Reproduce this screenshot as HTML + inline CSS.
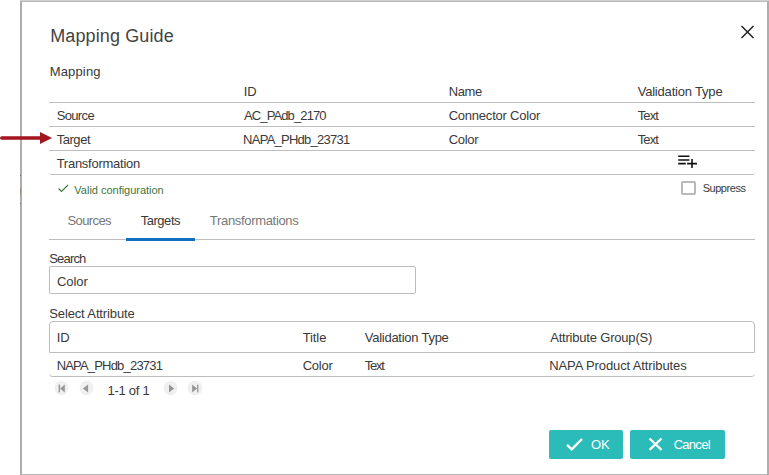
<!DOCTYPE html>
<html><head><meta charset="utf-8">
<style>
html,body{margin:0;padding:0;width:769px;height:475px;overflow:hidden;background:#fff;}
body{position:relative;font-family:"Liberation Sans",sans-serif;color:#333;}
.t{position:absolute;white-space:nowrap;}
.a{position:absolute;}
.hl{position:absolute;height:1px;background:#bdbdbd;}
.pg{position:absolute;top:381.3px;width:13.6px;height:13.6px;border-radius:50%;background:#f0f0f0;box-shadow:0 0 1px #e2e2e2;}
</style></head><body>
<!-- dialog frame -->
<div class="a" style="left:20px;top:0;width:749px;height:475px;box-sizing:border-box;border-left:2px solid #adadad;border-right:2px solid #adadad;border-top:2px solid #bababa;border-bottom:1px solid #b5b5b5;border-radius:2px 2px 0 0;"></div>
<div class="a" style="left:20px;top:0;width:749px;height:1px;background:#d0d0d0;"></div>

<div class="a" style="left:20px;top:175px;width:1px;height:1px;background:#777;"></div>
<div class="a" style="left:20px;top:203px;width:1px;height:1px;background:#777;"></div>
<div class="a" style="left:20px;top:188px;width:1px;height:7px;background:#9a8a80;"></div>

<!-- close -->
<svg class="a" style="left:740px;top:25px" width="15" height="15" viewBox="0 0 15 15"><path d="M1.5 1 L13.5 13 M13.5 1 L1.5 13" stroke="#222" stroke-width="1.5" fill="none"/></svg>

<!-- mapping table lines -->
<div class="hl" style="left:49px;top:102px;width:706px;"></div>
<div class="hl" style="left:49px;top:126px;width:706px;"></div>
<div class="hl" style="left:49px;top:150px;width:706px;"></div>
<div class="a" style="left:49px;top:150px;width:706px;height:25px;border-bottom:1px solid #bdbdbd;border-radius:0 0 3px 3px;box-sizing:border-box;"></div>

<!-- list-add icon -->
<svg class="a" style="left:670px;top:150px" width="30" height="20" viewBox="670 150 30 20"><path d="M678.2 156.3 H689.4 M678.2 160 H689.4 M678.2 163.6 H685.8 M687.1 163.6 H697 M692 159 V168" stroke="#111" stroke-width="1.6" fill="none"/></svg>

<!-- valid check -->
<svg class="a" style="left:57px;top:183px" width="13" height="11" viewBox="0 0 13 11"><path d="M1.5 5.5 L4.5 8.5 L11 2" stroke="#3c763d" stroke-width="1.1" fill="none"/></svg>

<!-- suppress checkbox -->
<div class="a" style="left:681px;top:181px;width:15px;height:14px;border:2px solid #b9b9b9;border-radius:2px;box-sizing:border-box;"></div>

<!-- tabs -->
<div class="hl" style="left:49px;top:239px;width:706px;"></div>
<div class="a" style="left:126px;top:238px;width:69px;height:3px;background:#1170c2;"></div>

<!-- search input -->
<div class="a" style="left:49px;top:266px;width:367px;height:28px;border:1px solid #bdbdbd;border-radius:2px;box-sizing:border-box;"></div>

<!-- grid -->
<div class="a" style="left:49px;top:321px;width:706px;height:32px;border:1px solid #bdbdbd;border-radius:4px 4px 0 0;box-sizing:border-box;"></div>
<div class="a" style="left:49px;top:352px;width:706px;height:25px;border-bottom:1px solid #bdbdbd;border-radius:0 0 4px 4px;box-sizing:border-box;"></div>

<!-- pager -->
<div class="pg" style="left:54.8px;"></div>
<div class="pg" style="left:79.6px;"></div>
<div class="pg" style="left:163.5px;"></div>
<div class="pg" style="left:188.4px;"></div>
<svg class="a" style="left:0;top:370px" width="210" height="30" viewBox="0 370 210 30">
<g fill="#979797">
<rect x="58.6" y="384.6" width="1.5" height="7.8"/><path d="M60.1 388.5 L64.8 384.6 V392.4 Z"/>
<path d="M82.9 388.5 L88.1 384.6 V392.4 Z"/>
<path d="M174.2 388.5 L169 384.6 V392.4 Z"/>
<path d="M197.1 388.5 L192.1 384.6 V392.4 Z"/><rect x="197.1" y="384.6" width="1.3" height="7.8"/>
</g></svg>

<!-- buttons -->
<div class="a" style="left:549px;top:430px;width:74px;height:29px;background:#2bbbb9;border-radius:2px;"></div>
<div class="a" style="left:630px;top:430px;width:95px;height:29px;background:#2bbbb9;border-radius:2px;"></div>
<svg class="a" style="left:560px;top:432px" width="30" height="24" viewBox="560 432 30 24"><path d="M567 444.8 L571.8 449.3 L582 439" stroke="#fff" stroke-width="2.4" fill="none"/></svg>
<svg class="a" style="left:642px;top:432px" width="26" height="24" viewBox="642 432 26 24"><path d="M649.5 438.5 L661.5 449.8 M661.5 438.5 L649.5 449.8" stroke="#fff" stroke-width="2.3" fill="none"/></svg>

<!-- arrow -->
<svg class="a" style="left:0px;top:130px" width="54" height="16" viewBox="0 0 54 16"><path d="M1.8 8 H42" stroke="#a3151f" stroke-width="3.6" stroke-linecap="round"/><path d="M40 2 L52.1 8 L40 14 Z" fill="#a3151f"/></svg>
<div class="t" style="left:50.15px;top:27px;font-size:18px;line-height:18px;color:#444;letter-spacing:0.125px;">Mapping Guide</div>
<div class="t" style="left:49.68px;top:65px;font-size:13px;line-height:13px;color:#393939;letter-spacing:0.167px;">Mapping</div>
<div class="t" style="left:243.73px;top:85px;font-size:13px;line-height:13px;color:#393939;letter-spacing:0.000px;">ID</div>
<div class="t" style="left:448.68px;top:85px;font-size:13px;line-height:13px;color:#393939;letter-spacing:-0.400px;">Name</div>
<div class="t" style="left:637.63px;top:85px;font-size:13px;line-height:13px;color:#393939;letter-spacing:-0.193px;">Validation Type</div>
<div class="t" style="left:56.63px;top:109px;font-size:13px;line-height:13px;color:#393939;letter-spacing:-0.640px;">Source</div>
<div class="t" style="left:244.00px;top:109px;font-size:13px;line-height:13px;color:#393939;letter-spacing:-0.882px;">AC_PAdb_2170</div>
<div class="t" style="left:448.63px;top:109px;font-size:13px;line-height:13px;color:#393939;letter-spacing:-0.214px;">Connector Color</div>
<div class="t" style="left:637.63px;top:109px;font-size:13px;line-height:13px;color:#393939;letter-spacing:-0.833px;">Text</div>
<div class="t" style="left:56.63px;top:133px;font-size:13px;line-height:13px;color:#393939;letter-spacing:-0.440px;">Target</div>
<div class="t" style="left:243.10px;top:133px;font-size:13px;line-height:13px;color:#393939;letter-spacing:-0.743px;">NAPA_PHdb_23731</div>
<div class="t" style="left:448.63px;top:133px;font-size:13px;line-height:13px;color:#393939;letter-spacing:-0.275px;">Color</div>
<div class="t" style="left:637.63px;top:133px;font-size:13px;line-height:13px;color:#393939;letter-spacing:-0.833px;">Text</div>
<div class="t" style="left:56.63px;top:157px;font-size:13px;line-height:13px;color:#393939;letter-spacing:-0.254px;">Transformation</div>
<div class="t" style="left:74.37px;top:185px;font-size:11px;line-height:11px;color:#3c763d;letter-spacing:-0.017px;">Valid configuration</div>
<div class="t" style="left:702.68px;top:183px;font-size:11px;line-height:11px;color:#393939;letter-spacing:-0.457px;">Suppress</div>
<div class="t" style="left:67.47px;top:214px;font-size:13px;line-height:13px;color:#777;letter-spacing:-0.600px;">Sources</div>
<div class="t" style="left:140.63px;top:214px;font-size:13px;line-height:13px;color:#393939;letter-spacing:-0.450px;">Targets</div>
<div class="t" style="left:209.84px;top:214px;font-size:13px;line-height:13px;color:#777;letter-spacing:-0.321px;">Transformations</div>
<div class="t" style="left:49.26px;top:252px;font-size:13px;line-height:13px;color:#393939;letter-spacing:-0.820px;">Search</div>
<div class="t" style="left:57.05px;top:275px;font-size:13px;line-height:13px;color:#393939;letter-spacing:-0.075px;">Color</div>
<div class="t" style="left:49.26px;top:307px;font-size:13px;line-height:13px;color:#393939;letter-spacing:-0.133px;">Select Attribute</div>
<div class="t" style="left:56.73px;top:331px;font-size:13px;line-height:13px;color:#393939;letter-spacing:0.000px;">ID</div>
<div class="t" style="left:302.63px;top:331px;font-size:13px;line-height:13px;color:#393939;letter-spacing:-0.075px;">Title</div>
<div class="t" style="left:364.74px;top:331px;font-size:13px;line-height:13px;color:#393939;letter-spacing:-0.257px;">Validation Type</div>
<div class="t" style="left:550.16px;top:331px;font-size:13px;line-height:13px;color:#393939;letter-spacing:-0.194px;">Attribute Group(S)</div>
<div class="t" style="left:56.63px;top:359px;font-size:13px;line-height:13px;color:#393939;letter-spacing:-0.807px;">NAPA_PHdb_23731</div>
<div class="t" style="left:302.63px;top:359px;font-size:13px;line-height:13px;color:#393939;letter-spacing:-0.225px;">Color</div>
<div class="t" style="left:364.74px;top:359px;font-size:13px;line-height:13px;color:#393939;letter-spacing:-1.233px;">Text</div>
<div class="t" style="left:549.26px;top:359px;font-size:13px;line-height:13px;color:#393939;letter-spacing:-0.114px;">NAPA Product Attributes</div>
<div class="t" style="left:107.47px;top:384px;font-size:13px;line-height:13px;color:#393939;letter-spacing:-0.271px;">1-1 of 1</div>
<div class="t" style="left:591.10px;top:438px;font-size:13px;line-height:13px;color:#fff;letter-spacing:-0.300px;">OK</div>
<div class="t" style="left:673.63px;top:438px;font-size:13px;line-height:13px;color:#fff;letter-spacing:-0.700px;">Cancel</div>
</body></html>
